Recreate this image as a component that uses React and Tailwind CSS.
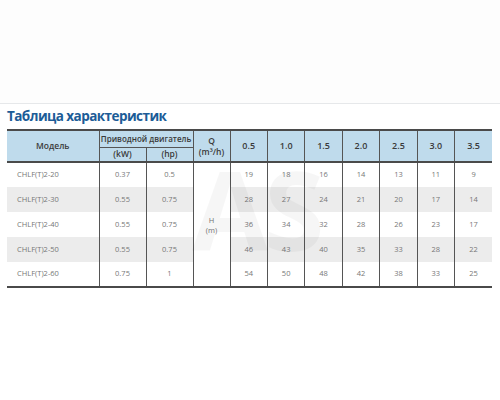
import React from 'react';

const cols = ['0.5', '1.0', '1.5', '2.0', '2.5', '3.0', '3.5'];

const rows = [
  { model: 'CHLF(T)2-20', kw: '0.37', hp: '0.5', h: ['19', '18', '16', '14', '13', '11', '9'] },
  { model: 'CHLF(T)2-30', kw: '0.55', hp: '0.75', h: ['28', '27', '24', '21', '20', '17', '14'] },
  { model: 'CHLF(T)2-40', kw: '0.55', hp: '0.75', h: ['36', '34', '32', '28', '26', '23', '17'] },
  { model: 'CHLF(T)2-50', kw: '0.55', hp: '0.75', h: ['46', '43', '40', '35', '33', '28', '22'] },
  { model: 'CHLF(T)2-60', kw: '0.75', hp: '1', h: ['54', '50', '48', '42', '38', '33', '25'] },
];

const App = () => {
  return (
    <div className="w-[500px] h-[400px] bg-white overflow-hidden font-['Open_Sans',sans-serif]">
      <div className="h-[104px] bg-[#fdfdfd] border-b border-[#e6e8ea]" />
      <div className="relative px-[7px] pt-[3px]">
        <h1 className="text-[13.5px] leading-[18px] font-bold text-[#1c5c97] tracking-[-0.55px]">Таблица характеристик</h1>
        <table className="relative mt-[4px] w-[485px] table-fixed border-collapse border-t-2 border-b-2 border-[#4a4a4a]">
          <colgroup>
            <col className="w-[92px]" />
            <col className="w-[47px]" />
            <col className="w-[47px]" />
            <col className="w-[37px]" />
            {cols.map((c) => (
              <col key={c} />
            ))}
          </colgroup>
          <thead className="bg-[#bfdbec] text-[#3a3a3a] font-semibold">
            <tr className="h-[17px]">
              <th rowSpan={2} className="text-[8.5px] font-semibold border-r border-[#555]">Модель</th>
              <th colSpan={2} className="text-[8px] font-semibold border-r border-b border-[#555] leading-[15px]">Приводной двигатель</th>
              <th rowSpan={2} className="text-[8.5px] font-semibold leading-[11px] border-r border-[#555]">
                Q
                <br />
                (m³/h)
              </th>
              {cols.map((c, i) => (
                <th key={c} rowSpan={2} className={`text-[9px] font-semibold ${i < cols.length - 1 ? 'border-r border-[#555]' : ''}`}>
                  {c}
                </th>
              ))}
            </tr>
            <tr className="h-[15px] border-b-2 border-[#4a4a4a]">
              <th className="text-[8.5px] font-semibold border-r border-[#555]">(kW)</th>
              <th className="text-[8.5px] font-semibold border-r border-[#555]">(hp)</th>
            </tr>
          </thead>
          <tbody className="text-[7.5px] text-[#777]">
            {rows.map((r, ri) => (
              <tr key={r.model} className={`h-[25px] ${ri % 2 === 1 ? 'bg-[#ececec]' : 'bg-white'}`}>
                <td className="pl-[10px] border-r border-[#555]">{r.model}</td>
                <td className="text-center border-r border-[#555]">{r.kw}</td>
                <td className="text-center border-r border-[#555]">{r.hp}</td>
                {ri === 0 && (
                  <td rowSpan={5} className="bg-white text-center leading-[10px] border-r border-[#555]">
                    H
                    <br />
                    (m)
                  </td>
                )}
                {r.h.map((v, i) => (
                  <td key={i} className={`text-center ${i < r.h.length - 1 ? 'border-r border-[#555]' : ''}`}>
                    {v}
                  </td>
                ))}
              </tr>
            ))}
          </tbody>
        </table>
        <div className="pointer-events-none absolute left-[192px] top-[49px] text-[110px] leading-none font-bold text-black/[0.035] tracking-[-4px]">
          AS
        </div>
      </div>
    </div>
  );
};

export default App;
